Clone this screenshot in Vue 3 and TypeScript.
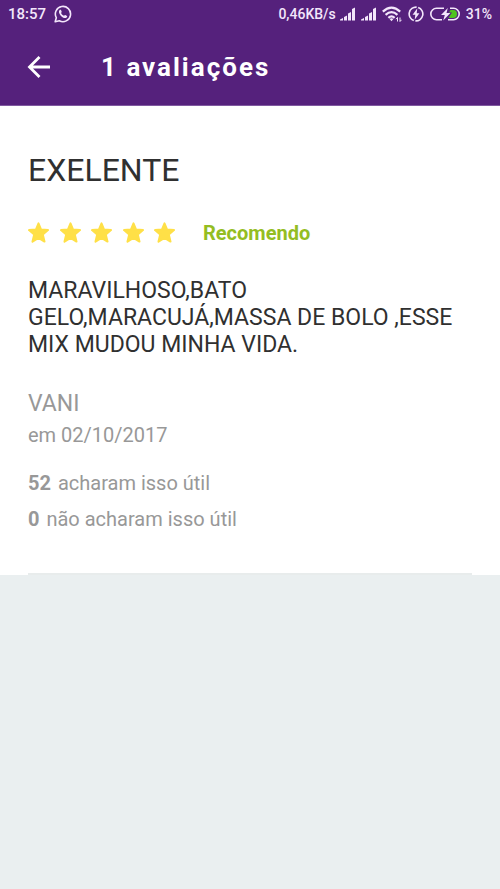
<script setup lang="ts">
import { ref } from 'vue'

interface Review {
  title: string
  stars: number
  verdict: string
  text: string
  author: string
  date: string
  helpful: number
  unhelpful: number
}

const time = '18:57'
const speed = '0,46KB/s'
const battery = '31%'

const reviews = ref<Review[]>([
  {
    title: 'EXELENTE',
    stars: 5,
    verdict: 'Recomendo',
    text: 'MARAVILHOSO,BATO GELO,MARACUJÁ,MASSA DE BOLO ,ESSE MIX MUDOU MINHA VIDA.',
    author: 'VANI',
    date: '02/10/2017',
    helpful: 52,
    unhelpful: 0,
  },
])
</script>

<template>
  <div class="screen">
    <header class="top">
      <div class="status">
        <div class="status-left">
          <span>{{ time }}</span>
          <svg viewBox="0 0 18 18" width="18" height="18" aria-hidden="true">
            <path d="M1.2 16.8 2.3 12.7A7.6 7.6 0 1 1 5.3 15.7Z" fill="none" stroke="currentColor" stroke-width="1.6" stroke-linejoin="round" />
            <path d="M5.6 5.1C6 4.6 6.7 4.5 7 5L7.7 6.7C7.8 7.1 7.1 7.7 7.1 8C7.7 9.3 8.7 10.2 10 10.7C10.4 10.8 10.9 9.9 11.3 10L13 10.9C13.4 11.2 13.1 12 12.6 12.5C10.9 13.8 8.4 12.3 7 10.9C5.6 9.5 4.1 7 5.6 5.1Z" fill="currentColor" />
          </svg>
        </div>
        <div class="status-right">
          <span>{{ speed }}</span>
          <svg v-for="n in 2" :key="n" class="signal" viewBox="0 0 15 14" width="15" height="14" aria-hidden="true">
            <path d="M0 13.5V12.5L3 11V13.5ZM4 13.5V10L7 8.5V13.5ZM8 13.5V6.5L11 5V13.5ZM12 13.5V2L15 0.5V13.5Z" fill="currentColor" />
          </svg>
          <svg viewBox="0 0 20 16" width="20" height="16" aria-hidden="true">
            <g fill="none" stroke="currentColor" stroke-width="2.2">
              <path d="M0.8 5.6Q9.5 -2.4 18.2 5.6" />
              <path d="M3.6 8.9Q9.5 3.5 15.4 8.9" />
              <path d="M6.4 11.9Q9.5 8.9 12.6 11.9" />
            </g>
            <path d="M7.6 12.9Q9.5 11.5 11.4 12.9L9.5 15.2Z" fill="currentColor" />
            <path d="M15.5 15.5V11.5L14 13.2M18 11.5V15.5L19.5 13.8" fill="none" stroke="currentColor" stroke-width="1" />
          </svg>
          <svg viewBox="0 0 16 16" width="16" height="16" aria-hidden="true">
            <path d="M8.6 1.1A6.9 6.9 0 0 0 5.8 14.5M10.2 1.5A6.9 6.9 0 0 1 7.4 14.9" fill="none" stroke="currentColor" stroke-width="1.6" />
            <path d="M9.3 2.2 4.6 8.8H7.3L6.7 13.8 11.4 7.2H8.7Z" fill="currentColor" />
          </svg>
          <svg viewBox="0 0 30 14" width="30" height="14" aria-hidden="true">
            <path d="M14 1.3H6.5A5.7 5.7 0 0 0 6.5 12.7H12M20 1.3H23.5A5.7 5.7 0 0 1 23.5 12.7H18" fill="none" stroke="currentColor" stroke-width="1.6" />
            <path d="M20.5 3H23A4 4 0 0 1 23 11H18.5L22 5.5H19Z" fill="#4fc21e" />
            <path d="M17.8 1 11 8H14.8L13.2 13.4 20.4 6H16.5Z" fill="currentColor" />
          </svg>
          <span>{{ battery }}</span>
        </div>
      </div>
      <div class="bar">
        <button class="back" type="button" aria-label="Voltar">
          <svg viewBox="0 0 24 24" width="24" height="24" aria-hidden="true">
            <path d="M23 12H3M12.5 2 2.5 12 12.5 22" fill="none" stroke="currentColor" stroke-width="2.8" />
          </svg>
        </button>
        <h1>{{ reviews.length }} avaliações</h1>
      </div>
    </header>

    <main class="list">
      <article v-for="review in reviews" :key="review.author" class="review">
        <h2>{{ review.title }}</h2>
        <div class="rating">
          <div class="stars" role="img" :aria-label="`${review.stars} estrelas`">
            <svg v-for="n in review.stars" :key="n" viewBox="0 0 22 22" width="22" height="22">
              <path d="M10.5 1.4 13.1 7.6 20 8.1 14.8 12.6 16.5 19.6 10.5 15.8 4.5 19.6 6.2 12.6 1 8.1 7.9 7.6Z" fill="#ffe047" stroke="#ffe047" stroke-width="2" stroke-linejoin="round" />
            </svg>
          </div>
          <strong class="verdict">{{ review.verdict }}</strong>
        </div>
        <p class="text">{{ review.text }}</p>
        <p class="author">{{ review.author }}</p>
        <p class="meta date">em {{ review.date }}</p>
        <p class="meta"><b>{{ review.helpful }}</b> acharam isso útil</p>
        <p class="meta"><b>{{ review.unhelpful }}</b> não acharam isso útil</p>
      </article>
    </main>
  </div>
</template>

<style>
body {
  background: #eaeff0;
}
</style>

<style scoped>
.screen {
  font-family: Roboto, "Liberation Sans", sans-serif;
  color: #303030;
}

.top {
  background: #55217c;
  border-bottom: 1px solid #8059a0;
  color: #fff;
}

.status {
  display: flex;
  justify-content: space-between;
  align-items: center;
  height: 28px;
  padding: 0 8px;
  font-size: 14px;
  font-weight: 500;
  color: #f3e6fb;
}

.status-left,
.status-right {
  display: flex;
  align-items: center;
}

.status-left {
  gap: 8px;
  font-size: 15px;
}

.status-right {
  gap: 6px;
}

.status-right .signal:first-of-type {
  margin-left: -2px;
}

.bar {
  display: flex;
  align-items: center;
  gap: 50px;
  height: 77px;
  padding: 0 27px;
}

.back {
  display: flex;
  padding: 0;
  border: 0;
  background: none;
  color: inherit;
  cursor: pointer;
}

h1,
h2,
p {
  margin: 0;
}

h1 {
  font-size: 26px;
  font-weight: 700;
  letter-spacing: 2px;
}

.list {
  background: #fff;
  padding: 0 28px;
}

.review {
  padding: 43px 0 36px;
  border-bottom: 2px solid #e8ecec;
}

h2 {
  font-size: 32px;
  font-weight: 400;
  line-height: 42px;
}

.rating {
  display: flex;
  align-items: center;
  gap: 27px;
  margin-top: 30px;
}

.stars {
  display: flex;
  justify-content: space-between;
  width: 148px;
}

.verdict {
  font-size: 20px;
  line-height: 24px;
  color: #94bd22;
}

.text {
  margin-top: 32px;
  font-size: 23px;
  line-height: 27px;
}

.author {
  margin-top: 33px;
  font-size: 23px;
  line-height: 26px;
  color: #989898;
}

.meta {
  font-size: 20px;
  line-height: 36px;
  color: #989898;
}

.date {
  margin-bottom: 12px;
}

.meta b {
  margin-right: 2px;
}
</style>
